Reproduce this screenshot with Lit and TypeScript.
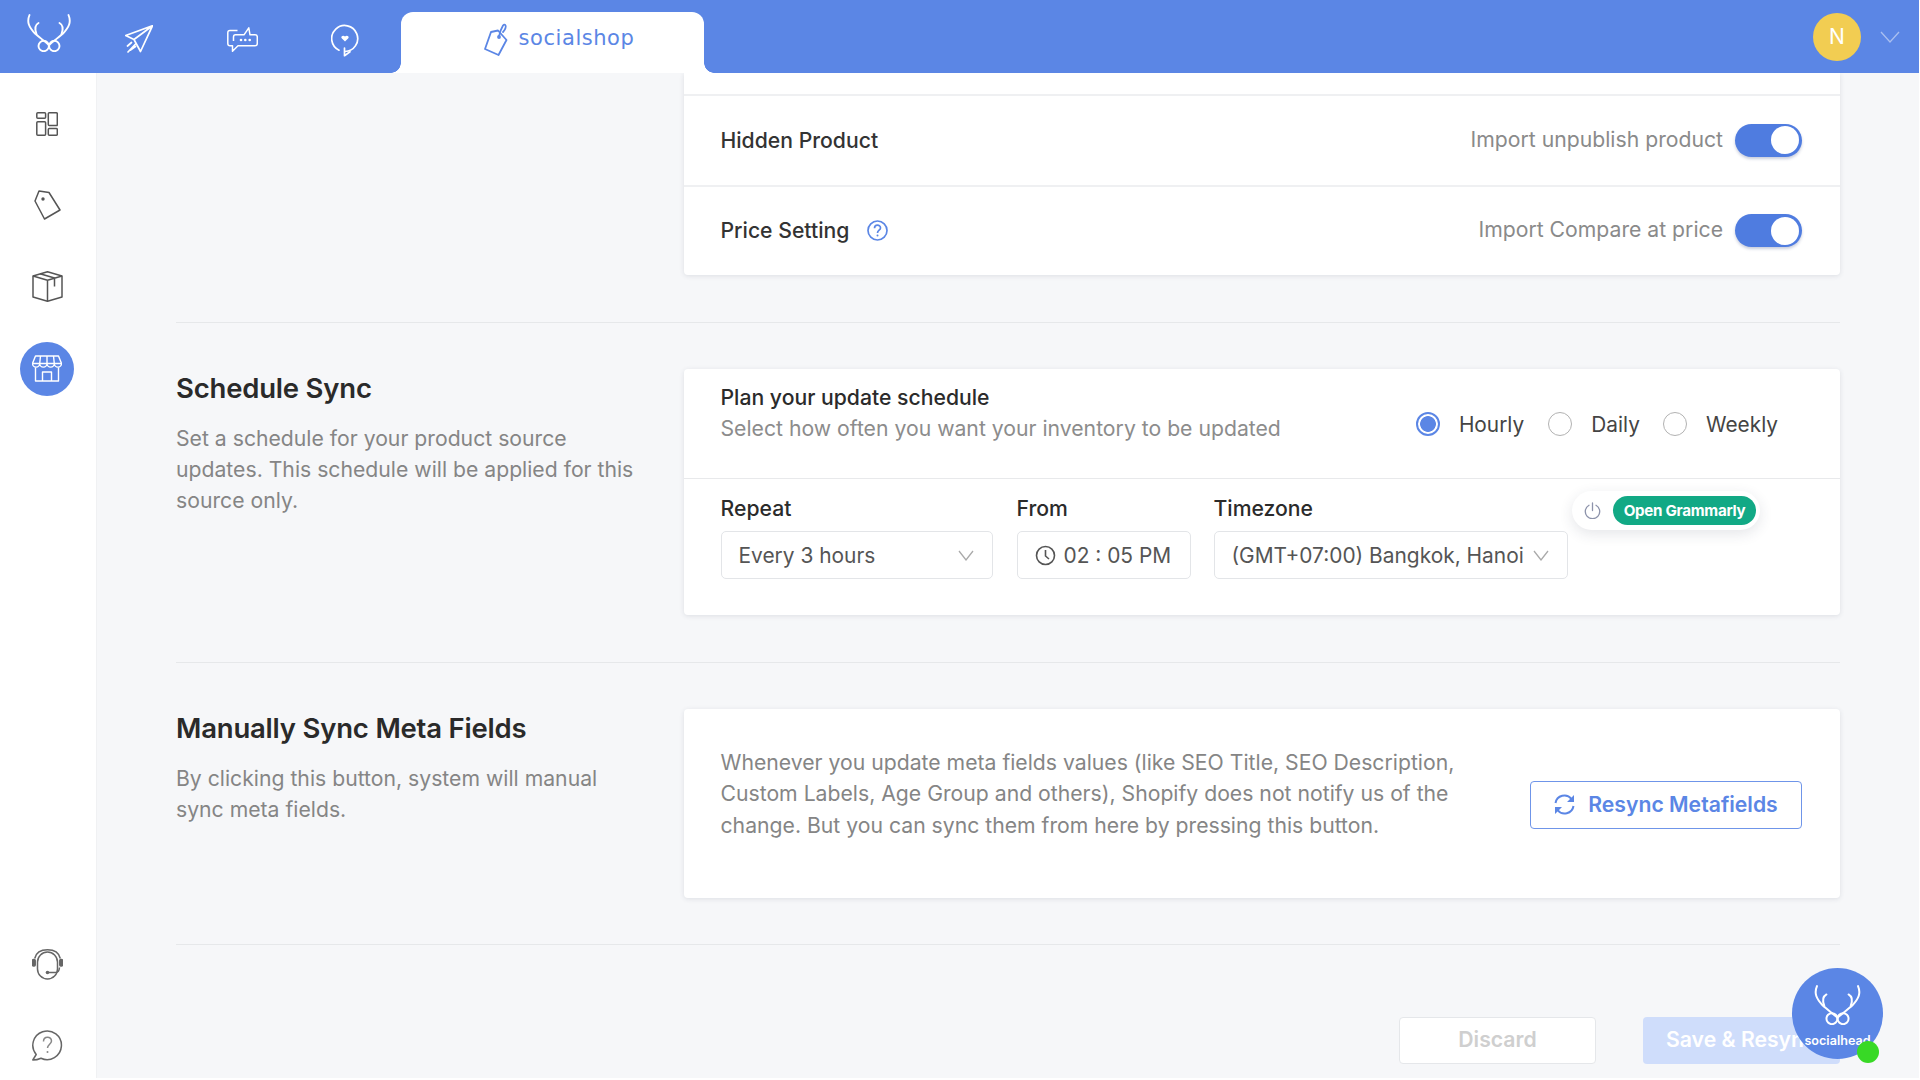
import { LitElement, html, css, svg } from "lit";
import { customElement } from "lit/decorators.js";

const antler = svg`
  <g fill="none" stroke="currentColor" stroke-width="1.9" stroke-linecap="round">
    <path d="M2.5 1C-.5 8 2 13 8 19.5C12 23 16 26 22 31"/>
    <path d="M11.5 9C8 11 7.5 15 9.5 20"/>
    <path d="M41.5 1C44.5 8 42 13 36 19.5C32 23 28 26 22 31"/>
    <path d="M32.5 9C36 11 36.5 15 34.5 20"/>
    <circle cx="16.7" cy="32" r="5.2"/>
    <circle cx="27.3" cy="32" r="5.2"/>
  </g>`;

const chevron = svg`<path d="M1 1l7 9 7-9" fill="none" stroke="currentColor" stroke-width="1.3"/>`;

@customElement("app-root")
export class AppRoot extends LitElement {
  static styles = css`
    :host {
      display: block;
      position: relative;
      width: 1919px;
      height: 1078px;
      overflow: hidden;
      background: #fff;
      font-family: Inter, "Liberation Sans", sans-serif;
      font-size: 21.2px;
      line-height: 31.2px;
      color: #2b2b2b;
    }
    svg { display: block; flex: none; }
    .top {
      height: 73px;
      background: #5b86e5;
      display: flex;
      align-items: flex-end;
      color: #fff;
    }
    .tb-icons { display: flex; height: 72px; align-items: center; }
    .logo { margin-left: 27px; margin-top: -8px; }
    .plane { margin-left: 54px; margin-top: 4px; }
    .chat { margin-left: 74px; margin-top: 5px; }
    .loop { margin-left: 73px; margin-top: 7px; }
    .tab {
      margin-left: 42px;
      width: 303px;
      height: 61px;
      background: #fff;
      border-radius: 12px 12px 0 0;
      display: flex;
      align-items: center;
      justify-content: center;
      gap: 11px;
      color: #5b86e5;
      position: relative;
      padding: 0 0 7px 13px;
      box-sizing: border-box;
    }
    .tab::before, .tab::after {
      content: "";
      position: absolute;
      bottom: 0;
      width: 10px;
      height: 10px;
      background: radial-gradient(circle at 0 0, #5b86e5 9.5px, #fff 10px);
    }
    .tab::before { left: -10px; }
    .tab::after { right: -10px; transform: scaleX(-1); }
    .tab span {
      font-family: "DejaVu Sans", sans-serif;
      font-size: 21px;
      letter-spacing: 0.55px;
    }
    .grow { flex: 1; }
    .avatar {
      width: 48px;
      height: 48px;
      border-radius: 50%;
      background: #f2cd52;
      color: #fff;
      font-size: 21px;
      display: flex;
      align-items: center;
      justify-content: center;
      align-self: center;
    }
    .caret { margin: 0 19px 0 19px; align-self: center; color: #a9bff0; }
    .body { display: flex; height: 1005px; }
    .side {
      width: 96px;
      flex: none;
      background: #fff;
      display: flex;
      flex-direction: column;
      align-items: center;
      padding: 23.5px 2px 17px 0;
      box-sizing: border-box;
      color: #555;
      box-shadow: 1px 0 0 #f0f1f3;
      position: relative;
    }
    .side .it {
      width: 54px;
      height: 54px;
      display: flex;
      align-items: center;
      justify-content: center;
      margin-bottom: 27.7px;
    }
    .side .it.on { background: #5b86e5; border-radius: 50%; color: #fff; }
    .side .low { margin-top: auto; display: flex; flex-direction: column; gap: 50px; color: #666; }
    .main {
      flex: 1;
      background: #f6f7f9;
      padding: 0 79px 0 80px;
      overflow: hidden;
    }
    .sec { display: grid; grid-template-columns: 508px 1fr; }
    .sec h2 {
      margin: 0;
      font-size: 27.5px;
      font-weight: 600;
      line-height: 36px;
      color: #2a2a2a;
      letter-spacing: -0.2px;
    }
    .sec .desc { margin: 17.2px 0 0; color: #858585; }
    hr { border: 0; height: 1px; background: #e6e8ea; margin: 46.5px 0 46px; }
    .card {
      background: #fff;
      border-radius: 4px;
      box-shadow: 0 1px 5px rgba(40, 50, 70, 0.12);
      position: relative;
    }
    .sec0 .card { height: 202px; padding-top: 21px; box-sizing: border-box; border-radius: 0 0 4px 4px; }
    .row {
      height: 90.5px;
      border-top: 2px solid #eff0f2;
      box-sizing: border-box;
      display: flex;
      align-items: center;
      padding: 0 38px 0 36.5px;
      gap: 12px;
    }
    .row b { font-weight: 500; color: #333; }
    .row .help { margin-left: 6px; color: #5b86e5; }
    .row .lbl { margin-left: auto; margin-top: -2px; color: #8a8a8a; }
    .toggle {
      width: 67px;
      height: 33px;
      border-radius: 17px;
      background: #4f7ce0;
      box-shadow: 0 2px 3px rgba(40, 60, 120, 0.25);
      display: flex;
      align-items: center;
      justify-content: flex-end;
      padding-right: 3px;
      box-sizing: border-box;
    }
    .toggle i { display: block; width: 28px; height: 28px; border-radius: 50%; background: #fff; }
    .sec1 { margin-top: 0.5px; }
    .sec1 .title { padding-top: 1.1px; }
    .sec1 .card { height: 246.5px; }
    .plan {
      height: 110.5px;
      box-sizing: border-box;
      border-bottom: 1px solid #e8e9eb;
      padding: 13.5px 62px 0 36.5px;
      display: flex;
      justify-content: space-between;
    }
    .plan b { display: block; font-weight: 500; }
    .plan span { color: #8c8c8c; }
    .radios { display: flex; align-items: center; height: 85px; font-size: 20.8px; }
    .radio { display: flex; align-items: center; gap: 19px; margin-right: 23.2px; color: #444; }
    .radio:first-child { margin-right: 24.2px; }
    .radio:last-child { margin-right: 0; }
    .radio i {
      width: 24px;
      height: 24px;
      border: 1.5px solid #b2b2b2;
      border-radius: 50%;
      box-sizing: border-box;
      display: block;
    }
    .radio.on i { border: 2px solid #5b86e5; background: radial-gradient(circle, #5b86e5 7.5px, #fff 8.2px); }
    .fields {
      display: grid;
      grid-template-columns: 296px 197px 354px;
      padding: 13.5px 0 0 36.5px;
    }
    .fields label { display: block; font-weight: 500; margin-bottom: 7.5px; }
    .inp {
      height: 48px;
      box-sizing: border-box;
      border: 1px solid #e3e5e8;
      border-radius: 5px;
      display: flex;
      align-items: center;
      color: #555;
      font-size: 20.9px;
      padding: 0 18px 0 17px;
      justify-content: space-between;
      white-space: nowrap;
    }
    .inp svg { color: #aaa; }
    .w1 { width: 272px; }
    .w2 { width: 174px; justify-content: flex-start; gap: 8px; padding-left: 17px; }
    .w2 svg { color: #555; }
    .gram {
      position: absolute;
      left: 888px;
      top: 122.5px;
      width: 188px;
      height: 39px;
      border-radius: 20px;
      background: #fff;
      box-shadow: 0 4px 14px rgba(40, 50, 70, 0.12);
      display: flex;
      align-items: center;
      box-sizing: border-box;
      padding: 0 4px 0 12px;
      gap: 12px;
    }
    .gram span {
      flex: 1;
      height: 29px;
      border-radius: 15px;
      background: #12a985;
      color: #fff;
      font-size: 15.2px;
      font-weight: 700;
      letter-spacing: -0.3px;
      line-height: 29px;
      text-align: center;
      white-space: nowrap;
    }
    .sec2 .head { padding-top: 1px; }
    .sec2 .card {
      height: 189px;
      display: flex;
      justify-content: space-between;
      padding: 38.5px 38px 0 36.5px;
      box-sizing: border-box;
    }
    .sec2 p { margin: 0; color: #858585; }
    .sec2 .card p { line-height: 31.4px; }
    .sync {
      width: 272px;
      height: 48px;
      margin-top: 33.5px;
      box-sizing: border-box;
      border: 1.5px solid #6f95e9;
      border-radius: 4px;
      display: flex;
      align-items: center;
      justify-content: center;
      gap: 13px;
      color: #5b86e5;
      font-weight: 600;
    }
    .foot { display: flex; justify-content: flex-end; gap: 47px; margin-top: 71.5px; }
    .btn {
      height: 47px;
      width: 197px;
      box-sizing: border-box;
      border-radius: 4px;
      display: flex;
      align-items: center;
      justify-content: center;
      font-weight: 600;
      white-space: nowrap;
    }
    .discard { background: #fff; border: 1px solid #e5e7ea; color: #cfcfcf; }
    .save { background: #cfddfb; color: #fff; justify-content: flex-start; padding-left: 23px; }
    .bubble {
      position: absolute;
      left: 1792px;
      top: 968px;
      width: 91px;
      height: 91px;
      border-radius: 50%;
      background: #5b86e5;
      color: #fff;
      display: flex;
      flex-direction: column;
      align-items: center;
      padding-top: 17px;
      box-sizing: border-box;
      font-size: 12.6px;
      font-weight: 600;
      line-height: 15px;
    }
    .bubble span { margin-top: 8px; }
    .dot {
      position: absolute;
      left: 1857px;
      top: 1041px;
      width: 22px;
      height: 22px;
      border-radius: 50%;
      background: #38d926;
    }
  `;

  render() {
    return html`
      <div class="top">
        <div class="tb-icons">
          <svg class="logo" width="44" height="38" viewBox="0 0 44 38">${antler}</svg>
          <svg class="plane" width="28" height="28" viewBox="0 0 28 28" fill="none" stroke="currentColor" stroke-width="1.7" stroke-linejoin="round" stroke-linecap="round">
            <path d="M27.5.7L.7 10.5l8.3 4L27.5.7L15.5 26.5L9 14.5"/>
            <path d="M3 27l7.5-8M2.5 21l4-3.5M5.5 25l5-3.5"/>
          </svg>
          <svg class="chat" width="31" height="25" viewBox="0 0 31 25" fill="none" stroke="currentColor" stroke-width="1.5" stroke-linejoin="round">
            <path d="M10.5 3.5H3Q.8 3.5 .8 6v10.5Q.8 18.8 3 18.8h2.5v5.500l5.500-5.500h17Q30.300 18.800 30.300 16.500V10Q30.300 7.800 28 7.800h-5L21.800.8 17 7.800H8.500Q6.500 7.800 6.500 10v4"/>
            <g fill="currentColor" stroke="none"><circle cx="14" cy="13" r="1.3"/><circle cx="18.3" cy="13" r="1.3"/><circle cx="22.7" cy="13" r="1.3"/></g>
          </svg>
          <svg class="loop" width="28" height="33" viewBox="0 0 28 33" fill="none" stroke="currentColor" stroke-width="1.7" stroke-linecap="round" stroke-linejoin="round">
            <path d="M8 26.2A13 13 0 1 1 14 27.5"/>
            <path d="M13.5 24v7.7l5.5-4"/>
            <path fill="currentColor" stroke="none" d="M14 17.5l-3.3-3.2c-1.5-1.8 1.7-3.9 3.3-1.7 1.6-2.2 4.8-.1 3.3 1.7z"/>
          </svg>
        </div>
        <div class="tab">
          <svg width="24" height="33" viewBox="0 0 24 33" fill="none" stroke="currentColor" stroke-width="1.8" stroke-linejoin="round" stroke-linecap="round">
            <path d="M7 9l7-1.5L22.5 17l-8 15L1 26z"/>
            <path d="M15 13.5C16 8 17.5 5 19 2.5c1.5-2 3.5-.5 2.5 2.5-.5 2-1.5 3-2.5 4"/>
            <circle cx="15" cy="14" r="1" fill="currentColor"/>
          </svg>
          <span>socialshop</span>
        </div>
        <div class="grow"></div>
        <div class="avatar">N</div>
        <svg class="caret" width="20" height="12" viewBox="0 0 20 12"><path d="M1 1l9 10 9-10" fill="none" stroke="currentColor" stroke-width="1.3"/></svg>
      </div>

      <div class="body">
        <nav class="side">
          <div class="it">
            <svg width="22" height="24" viewBox="0 0 22 24" fill="none" stroke="currentColor" stroke-width="1.5">
              <rect x=".8" y=".8" width="8.8" height="5.5" rx="1"/>
              <rect x="12.3" y=".8" width="9" height="12.8" rx="1"/>
              <rect x=".8" y="9.8" width="8.8" height="13.4" rx="1"/>
              <rect x="12.3" y="16.5" width="9" height="6.7" rx="1"/>
            </svg>
          </div>
          <div class="it">
            <svg width="27" height="30" viewBox="0 0 27 30" fill="none" stroke="currentColor" stroke-width="1.5" stroke-linejoin="round">
              <path d="M5 1l10 1.5L26 20l-15.5 9L1 11z"/>
              <circle cx="9" cy="9" r="1.7" fill="currentColor" stroke="none"/>
            </svg>
          </div>
          <div class="it">
            <svg width="31" height="31" viewBox="0 0 31 31" fill="none" stroke="currentColor" stroke-width="1.5" stroke-linejoin="round">
              <path d="M15.5.8L30 5v21l-14.5 4.2L1 26V5z"/>
              <path d="M1 5l14.5 4.2L30 5M15.5 9.2v21M8 2.7L22.5 7v8.5"/>
            </svg>
          </div>
          <div class="it on">
            <svg width="30" height="27" viewBox="0 0 30 27" fill="none" stroke="currentColor" stroke-width="1.4" stroke-linejoin="round">
              <path d="M3.5 1h23L29.5 8.5a3.6 3.6 0 0 1-7.2 0 3.6 3.6 0 0 1-7.3 0 3.6 3.6 0 0 1-7.3 0 3.6 3.6 0 0 1-7.2 0z"/>
              <path d="M8.5 1L7.7 8.5M15 1v7.5M21.5 1l.8 7.5M.5 8.5h29"/>
              <path d="M3.5 12.5V26h23V12.5M10.5 26v-9h9v9"/>
            </svg>
          </div>
          <div class="low">
            <svg width="31" height="31" viewBox="0 0 31 31" fill="none" stroke="currentColor" stroke-width="1.5">
              <path d="M2.7 9.5C4 4 9 .8 15.5.8S27 4 28.3 9.5"/>
              <rect x="5.5" y="3" width="20" height="27" rx="10"/>
              <rect x="0.5" y="10.5" width="2.7" height="6.5" rx="1" fill="currentColor"/>
              <rect x="27.8" y="10.5" width="2.7" height="6.5" rx="1" fill="currentColor"/>
              <path d="M17 23.5h7q3 0 3.5-5"/>
              <circle cx="15.5" cy="23.5" r="1.8" fill="currentColor" stroke="none"/>
            </svg>
            <svg width="31" height="31" viewBox="0 0 31 31" fill="none" stroke="currentColor" stroke-width="1.5">
              <path d="M.8 30l3.4-5.5A14.3 14.3 0 1 1 9 28.2Q5 30 .8 30z" stroke-linejoin="round"/>
              <path d="M11.5 11.5c0-5.5 8-5.5 8-.5 0 3-4 3.5-4 7" stroke="#888"/>
              <circle cx="15.5" cy="22" r="1" fill="#888" stroke="none"/>
            </svg>
          </div>
        </nav>

        <main class="main">
          <section class="sec sec0">
            <div></div>
            <div class="card">
              <div class="row"><b>Hidden Product</b><span class="lbl">Import unpublish product</span><div class="toggle"><i></i></div></div>
              <div class="row">
                <b>Price Setting</b>
                <svg class="help" width="21" height="21" viewBox="0 0 21 21" fill="none" stroke="currentColor" stroke-width="1.7">
                  <circle cx="10.5" cy="10.5" r="9.5"/>
                  <path d="M7.5 8.2c0-4 6-4 6-.3 0 2.2-3 2.500-3 5"/>
                  <circle cx="10.5" cy="15.5" r="1" fill="currentColor" stroke="none"/>
                </svg>
                <span class="lbl">Import Compare at price</span><div class="toggle"><i></i></div>
              </div>
            </div>
          </section>
          <hr />
          <section class="sec sec1">
            <div class="title">
              <h2>Schedule Sync</h2>
              <p class="desc">Set a schedule for your product source<br />updates. This schedule will be applied for this<br />source only.</p>
            </div>
            <div class="card">
              <div class="plan">
                <div><b>Plan your update schedule</b><span>Select how often you want your inventory to be updated</span></div>
                <div class="radios">
                  <div class="radio on"><i></i>Hourly</div>
                  <div class="radio"><i></i>Daily</div>
                  <div class="radio"><i></i>Weekly</div>
                </div>
              </div>
              <div class="fields">
                <div>
                  <label>Repeat</label>
                  <div class="inp w1">Every 3 hours<svg width="16" height="11" viewBox="0 0 16 11">${chevron}</svg></div>
                </div>
                <div>
                  <label>From</label>
                  <div class="inp w2">
                    <svg width="21" height="21" viewBox="0 0 21 21" fill="none" stroke="currentColor" stroke-width="1.6"><circle cx="10.5" cy="10.5" r="9"/><path d="M10.5 5v6l3.5 3"/></svg>
                    02 : 05 PM
                  </div>
                </div>
                <div>
                  <label>Timezone</label>
                  <div class="inp">(GMT+07:00) Bangkok, Hanoi<svg width="16" height="11" viewBox="0 0 16 11">${chevron}</svg></div>
                </div>
              </div>
              <div class="gram">
                <svg width="17" height="17" viewBox="0 0 17 17" fill="none" stroke="#8d93ab" stroke-width="1.3" stroke-linecap="round"><path d="M8.5 1v7.5M5 3.2a7.2 7.2 0 1 0 7 0"/></svg>
                <span>Open Grammarly</span>
              </div>
            </div>
          </section>
          <hr />
          <section class="sec sec2">
            <div class="head">
              <h2>Manually Sync Meta Fields</h2>
              <p class="desc">By clicking this button, system will manual<br />sync meta fields.</p>
            </div>
            <div class="card">
              <p>Whenever you update meta fields values (like SEO Title, SEO Description,<br />Custom Labels, Age Group and others), Shopify does not notify us of the<br />change. But you can sync them from here by pressing this button.</p>
              <div class="sync">
                <svg width="21" height="21" viewBox="0 0 21 21" fill="none" stroke="currentColor" stroke-width="2">
                  <path d="M1.5 9A9 9 0 0 1 17.5 5"/>
                  <path d="M19.5 12A9 9 0 0 1 3.5 16"/>
                  <path fill="currentColor" stroke="none" d="M20 1v7h-7zM1 20v-7h7z"/>
                </svg>
                Resync Metafields
              </div>
            </div>
          </section>
          <hr />
          <div class="foot">
            <div class="btn discard">Discard</div>
            <div class="btn save">Save &amp; Resync</div>
          </div>
        </main>
      </div>

      <div class="bubble">
        <svg width="47" height="40" viewBox="0 0 44 38">${antler}</svg>
        <span>socialhead</span>
      </div>
      <div class="dot"></div>
    `;
  }
}
